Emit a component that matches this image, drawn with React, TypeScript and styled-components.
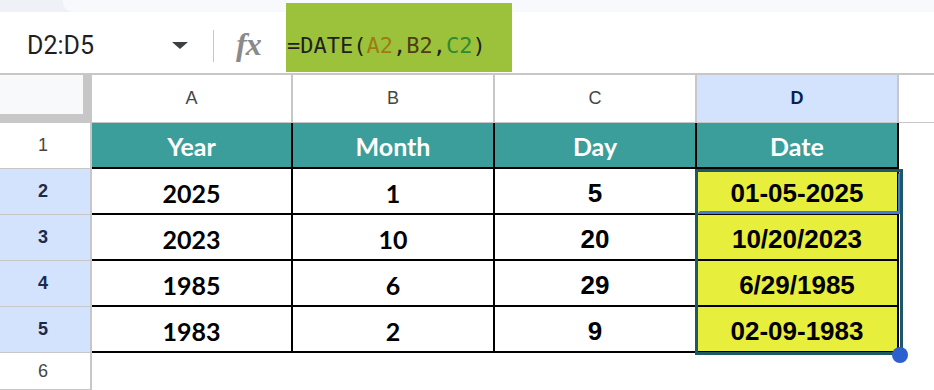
import styled, { createGlobalStyle } from 'styled-components';

const GlobalStyle = createGlobalStyle`
  html, body {
    margin: 0;
    padding: 0;
    background: #fff;
  }
  * {
    box-sizing: border-box;
  }
`;

type FontKind = 'calibri' | 'arial';

type Row = {
  year: string;
  month: string;
  day: string;
  date: string;
};

const rows: Row[] = [
  { year: '2025', month: '1', day: '5', date: '01-05-2025' },
  { year: '2023', month: '10', day: '20', date: '10/20/2023' },
  { year: '1985', month: '6', day: '29', date: '6/29/1985' },
  { year: '1983', month: '2', day: '9', date: '02-09-1983' },
];

const columns = ['A', 'B', 'C', 'D'];
const headers = ['Year', 'Month', 'Day', 'Date'];

const Page = styled.div`
  width: 934px;
  height: 390px;
  overflow: hidden;
  background: #fff;
  font-family: 'Liberation Sans', Arial, sans-serif;
`;

const TopStrip = styled.div`
  height: 12px;
  display: flex;
  background: #eef2f7;
`;

const TopStripInner = styled.div`
  flex: 1;
  margin-left: 63px;
  background: #f8f9fc;
  border-bottom-left-radius: 10px;
`;

const FormulaBar = styled.div`
  position: relative;
  height: 63px;
  display: flex;
  align-items: center;
  padding-top: 6px;
  border-bottom: 2px solid #c7c7c7;
`;

const NameBox = styled.div`
  width: 172px;
  padding-left: 27px;
  font-family: Roboto, 'Liberation Sans', sans-serif;
  font-size: 25px;
  color: #1f1f1f;
`;

const Caret = styled.div`
  width: 0;
  height: 0;
  border-left: 8px solid transparent;
  border-right: 8px solid transparent;
  border-top: 7px solid #3c4043;
  margin-right: 25px;
`;

const Divider = styled.div`
  width: 1px;
  height: 32px;
  background: #c4c7c5;
  margin-right: 22px;
`;

const FxLabel = styled.div`
  font-family: 'Liberation Serif', 'Times New Roman', serif;
  font-style: italic;
  font-weight: 700;
  font-size: 32px;
  color: #8a8a8a;
  letter-spacing: -1px;
  padding-bottom: 2px;
`;

const FormulaHighlight = styled.div`
  position: absolute;
  left: 286px;
  top: -9px;
  width: 226px;
  height: 69px;
  background: #9cc23c;
  display: flex;
  align-items: center;
  padding: 16px 0 0 1px;
  font-family: 'DejaVu Sans Mono', 'Liberation Mono', monospace;
  font-size: 22px;
  color: #1f1f1f;
`;

const Ref = styled.span<{ $color: string }>`
  color: ${(p) => p.$color};
`;

const Sheet = styled.div`
  position: relative;
  display: grid;
  grid-template-columns: 92px 201px 202px 202px 202px 1fr;
  grid-template-rows: 48px repeat(5, 46px) 37px;
`;

const Corner = styled.div`
  background: #f8f9fa;
  border-right: 9px solid #c7c7c7;
  border-bottom: 9px solid #c7c7c7;
`;

const ColHead = styled.div<{ $selected?: boolean; $last?: boolean }>`
  display: flex;
  align-items: center;
  justify-content: center;
  font-size: 18px;
  color: ${(p) => (p.$selected ? '#0b1f4d' : '#444746')};
  font-weight: ${(p) => (p.$selected ? 700 : 400)};
  background: ${(p) => (p.$selected ? '#d3e3fd' : '#fff')};
  border-right: ${(p) => (p.$last ? 'none' : '2px solid #c7c7c7')};
  border-bottom: 1px solid #c7c7c7;
`;

const RowHead = styled.div<{ $selected?: boolean }>`
  display: flex;
  align-items: center;
  justify-content: center;
  padding-right: 4px;
  font-size: 18px;
  color: ${(p) => (p.$selected ? '#1b2a4a' : '#444746')};
  font-weight: ${(p) => (p.$selected ? 700 : 400)};
  background: ${(p) => (p.$selected ? '#d3e3fd' : '#fff')};
  border-right: 2px solid #c7c7c7;
  border-bottom: 1px solid #c7c7c7;
`;

const HeaderCell = styled.div`
  display: flex;
  align-items: center;
  justify-content: center;
  padding-top: 2px;
  background: #3b9e9a;
  color: #fff;
  font-family: Lato, 'Open Sans', sans-serif;
  font-weight: 700;
  font-size: 25px;
  border-right: 2px solid #000;
  border-bottom: 2px solid #000;
`;

const DataCell = styled.div<{ $font?: FontKind; $highlight?: boolean }>`
  display: flex;
  align-items: center;
  justify-content: center;
  padding-top: 4px;
  background: ${(p) => (p.$highlight ? '#e8ee3c' : '#fff')};
  color: #000;
  font-family: ${(p) =>
    p.$font === 'arial' ? "'Liberation Sans', Arial, sans-serif" : "Lato, 'Open Sans', sans-serif"};
  font-weight: 700;
  font-size: ${(p) => (p.$font === 'arial' ? '26px' : '25px')};
  border-right: 2px solid #000;
  border-bottom: 2px solid #000;
`;

const EmptyCell = styled.div`
  background: #fff;
`;

const Selection = styled.div`
  position: absolute;
  left: 695px;
  top: 94px;
  width: 208px;
  height: 186px;
  border: 3px solid #1e5866;
  pointer-events: none;
`;

const ActiveCell = styled.div`
  position: absolute;
  left: 697px;
  top: 96px;
  width: 204px;
  height: 43px;
  border: 3px solid #3f7dd6;
  border-top-color: transparent;
  border-left-color: transparent;
  pointer-events: none;
`;

const FillHandle = styled.div`
  position: absolute;
  left: 892px;
  top: 272px;
  width: 16px;
  height: 16px;
  border-radius: 50%;
  background: #2c5fd0;
  pointer-events: none;
`;

export default function App() {
  return (
    <Page>
      <GlobalStyle />
      <TopStrip>
        <TopStripInner />
      </TopStrip>
      <FormulaBar>
        <NameBox>D2:D5</NameBox>
        <Caret />
        <Divider />
        <FxLabel>fx</FxLabel>
        <FormulaHighlight>
          =DATE(<Ref $color="#9c7c12">A2</Ref>,<Ref $color="#4f3d10">B2</Ref>,
          <Ref $color="#2f8a30">C2</Ref>)
        </FormulaHighlight>
      </FormulaBar>

      <Sheet>
        <Corner />
        {columns.map((c) => (
          <ColHead key={c} $selected={c === 'D'}>
            {c}
          </ColHead>
        ))}
        <ColHead $last />

        <RowHead>1</RowHead>
        {headers.map((h) => (
          <HeaderCell key={h}>{h}</HeaderCell>
        ))}
        <EmptyCell />

        {rows.map((r, i) => (
          <>
            <RowHead key={`h${i}`} $selected>
              {i + 2}
            </RowHead>
            <DataCell key={`a${i}`}>{r.year}</DataCell>
            <DataCell key={`b${i}`}>{r.month}</DataCell>
            <DataCell key={`c${i}`} $font="arial">
              {r.day}
            </DataCell>
            <DataCell key={`d${i}`} $font="arial" $highlight>
              {r.date}
            </DataCell>
            <EmptyCell key={`e${i}`} />
          </>
        ))}

        <RowHead>6</RowHead>
        <EmptyCell />
        <EmptyCell />
        <EmptyCell />
        <EmptyCell />
        <EmptyCell />

        <ActiveCell />
        <Selection />
        <FillHandle />
      </Sheet>
    </Page>
  );
}
